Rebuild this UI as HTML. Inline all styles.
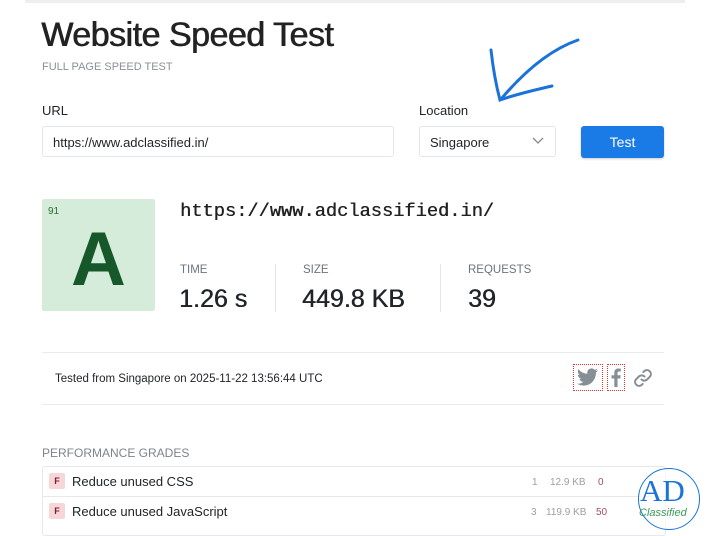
<!DOCTYPE html>
<html><head><meta charset="utf-8"><style>
*{margin:0;padding:0;box-sizing:border-box}
body{width:710px;height:530px;overflow:hidden;background:#fff;font-family:"Liberation Sans",sans-serif;color:#212529;position:relative}
.a{position:absolute;white-space:nowrap}
.lbl{font-size:11.5px;color:#6c757d;text-transform:uppercase}
.val{font-size:25px;color:#212529;text-shadow:0.5px 0 0 #212529}
.box{border:1px solid #e3e6ea;border-radius:3px;position:absolute}
</style></head><body>
<div class="a" style="left:25px;top:0;width:660px;height:3px;background:#eceef0"></div>
<div class="a" style="left:41px;top:16px;font-size:34px;letter-spacing:-0.5px;color:#222;text-shadow:0.7px 0 0 #222">Website Speed Test</div>
<div class="a" style="left:42px;top:61px;font-size:11px;color:#8a9096">FULL PAGE SPEED TEST</div>
<div class="a" style="left:42px;top:103px;font-size:13px">URL</div>
<div class="a" style="left:419px;top:103px;font-size:13px">Location</div>
<div class="box" style="left:42px;top:126px;width:352px;height:31px"></div>
<div class="a" style="left:53px;top:135px;font-size:13px">https://www.adclassified.in/</div>
<div class="box" style="left:419px;top:126px;width:137px;height:31px"></div>
<div class="a" style="left:430px;top:135px;font-size:13px">Singapore</div>
<svg class="a" style="left:532px;top:137px" width="12" height="8"><path d="M1 1 L6 6 L11 1" fill="none" stroke="#888" stroke-width="1.3"/></svg>
<div class="a" style="left:581px;top:126px;width:83px;height:32px;background:#1a7be6;border-radius:3px;color:#fff;font-size:14px;text-align:center;line-height:32px;box-shadow:0 1px 2px rgba(0,0,0,.2)">Test</div>
<svg class="a" style="left:480px;top:30px" width="110" height="80"><path d="M98 10 C75 18 50 35 22 68" fill="none" stroke="#1a73d9" stroke-width="3" stroke-linecap="round"/><path d="M11 20 C13 38 16 55 20 70 C40 63 55 60 72 56" fill="none" stroke="#1a73d9" stroke-width="3" stroke-linecap="round"/></svg>
<div class="a" style="left:42px;top:199px;width:113px;height:112px;background:#d4ecd9;border-radius:2px"></div>
<div class="a" style="left:48px;top:206px;font-size:10px;color:#2d6a3a">91</div>
<div class="a" style="left:42px;top:220px;width:113px;text-align:center;font-size:76px;font-weight:bold;color:#17582a;line-height:80px">A</div>
<div class="a" style="left:180px;top:200px;font-family:'Liberation Mono',monospace;font-size:18.7px;color:#222;text-shadow:0.4px 0 0 #222">https://www.adclassified.in/</div>
<div class="a lbl" style="left:180px;top:264px">Time</div>
<div class="a val" style="left:179px;top:285px">1.26 s</div>
<div class="a" style="left:275px;top:264px;width:1px;height:48px;background:#e3e6ea"></div>
<div class="a lbl" style="left:303px;top:264px">Size</div>
<div class="a val" style="left:302px;top:285px">449.8 KB</div>
<div class="a" style="left:440px;top:264px;width:1px;height:48px;background:#e3e6ea"></div>
<div class="a lbl" style="left:468px;top:264px">Requests</div>
<div class="a val" style="left:468px;top:285px">39</div>
<div class="a" style="left:42px;top:352px;width:622px;height:1px;background:#e9ecef"></div>
<div class="a" style="left:42px;top:404px;width:622px;height:1px;background:#e9ecef"></div>
<div class="a" style="left:55px;top:373px;font-size:11.5px">Tested from Singapore on 2025-11-22 13:56:44 UTC</div>
<div class="a" style="left:573px;top:364px;width:30px;height:27px;border:1px dotted #e53333"></div>
<svg class="a" style="left:577px;top:368px" width="22" height="19" viewBox="0 0 24 20"><path d="M23 2.3a9 9 0 0 1-2.7.8 4.7 4.7 0 0 0 2-2.6 9.3 9.3 0 0 1-3 1.2A4.7 4.7 0 0 0 11.3 6 13.3 13.3 0 0 1 1.6 1 4.7 4.7 0 0 0 3 7.3a4.6 4.6 0 0 1-2.1-.6v.1a4.7 4.7 0 0 0 3.8 4.6 4.700 4.700 0 0 1-2.100.1 4.700 4.700 0 0 0 4.400 3.300A9.400 9.400 0 0 1 0 16.700 13.300 13.300 0 0 0 7.200 18.800c8.600 0 13.400-7.100 13.400-13.400v-.6A9.500 9.500 0 0 0 23 2.300z" fill="#868e96"/></svg>
<div class="a" style="left:607px;top:364px;width:18px;height:27px;border:1px dotted #e53333"></div>
<svg class="a" style="left:611px;top:368px" width="10" height="19" viewBox="0 0 10 19"><path d="M6.5 19V10.5h2.8l.4-3.3H6.5V5.1c0-.9.3-1.6 1.6-1.6H9.8V.6A22 22 0 0 0 7.3.5C4.900.5 3.300 2 3.300 4.700v2.500H.5v3.300h2.800V19z" fill="#868e96"/></svg>
<svg class="a" style="left:633px;top:368px" width="20" height="20" viewBox="0 0 20 20"><g fill="none" stroke="#868e96" stroke-width="2" stroke-linecap="round"><path d="M8.5 11.5a4 4 0 0 0 5.6 0l3-3a4 4 0 0 0-5.6-5.6l-1.2 1.2"/><path d="M11.5 8.5a4 4 0 0 0-5.6 0l-3 3a4 4 0 0 0 5.600 5.600l1.200-1.200"/></g></svg>
<div class="a" style="left:42px;top:446px;font-size:12px;color:#7d848b">PERFORMANCE GRADES</div>
<div class="a" style="left:42px;top:466px;width:624px;height:70px;border:1px solid #e6e8eb;border-radius:3px"></div>
<div class="a" style="left:43px;top:496px;width:622px;height:1px;background:#e6e8eb"></div>
<div class="a" style="left:49px;top:473px;width:16px;height:16px;background:#f7d6da;border-radius:2px;color:#7a1f2e;font-size:9px;font-weight:bold;text-align:center;line-height:16px">F</div>
<div class="a" style="left:72px;top:474px;font-size:13px">Reduce unused CSS</div>
<div class="a" style="left:49px;top:503px;width:16px;height:16px;background:#f7d6da;border-radius:2px;color:#7a1f2e;font-size:9px;font-weight:bold;text-align:center;line-height:16px">F</div>
<div class="a" style="left:72px;top:504px;font-size:13px">Reduce unused JavaScript</div>
<div class="a" style="left:532px;top:477px;font-size:10px;color:#9aa0a6">1</div>
<div class="a" style="left:550px;top:477px;font-size:10px;color:#9aa0a6">12.9 KB</div>
<div class="a" style="left:598px;top:477px;font-size:10px;color:#9b5060">0</div>
<div class="a" style="left:531px;top:507px;font-size:10px;color:#9aa0a6">3</div>
<div class="a" style="left:546px;top:507px;font-size:10px;color:#9aa0a6">119.9 KB</div>
<div class="a" style="left:596px;top:507px;font-size:10px;color:#9b5060">50</div>
<div class="a" style="left:638px;top:468px;width:62px;height:62px;border:1.5px solid #1a73d9;border-radius:50%;background:rgba(255,255,255,.6)"></div>
<div class="a" style="left:640px;top:473px;font-family:'Liberation Serif',serif;font-size:31px;color:#1a73d9">AD</div>
<div class="a" style="left:639px;top:507px;font-size:11px;font-style:italic;color:#3a9a5a">Classified</div>
</body></html>
